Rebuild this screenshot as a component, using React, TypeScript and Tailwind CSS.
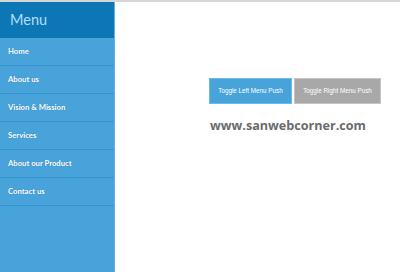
import React from "react";

const items = ["Home", "About us", "Vision & Mission", "Services", "About our Product", "Contact us"];

export default function App() {
  return (
    <div className="w-[400px] h-[272px] overflow-hidden bg-white flex flex-col" style={{ fontFamily: '"Open Sans", sans-serif' }}>
      <div className="h-[2px] bg-[#d6d6d6] shrink-0" />
      <div className="flex flex-1 min-h-0">
        <div className="w-[115px] shrink-0 bg-[#47a3da] border-r border-r-[#62b3e3] flex flex-col">
          <div className="h-[36px] bg-[#0d77b6] flex items-center pl-[10px] pt-[1px] text-[14.5px] font-normal text-[#afdefa] leading-none" style={{ fontFamily: 'Lato, sans-serif' }}>
            Menu
          </div>
          {items.map((t) => (
            <div
              key={t}
              className="h-[28px] border-b border-b-[#3495cf] flex items-center pl-[8px] text-[7.7px] font-bold text-white"
              style={{ textShadow: "0 0 1px rgba(0,0,0,0.25)", fontFamily: 'Lato, sans-serif' }}
            >
              {t}
            </div>
          ))}
        </div>
        <div className="flex-1 flex flex-col items-start pl-[94px] pt-[76px]">
          <div className="flex gap-[2px]">
            <div className="w-[83px] h-[26px] bg-[#47a3da] border border-[#6cb8e6] flex items-center justify-center text-white text-[6.3px]" style={{ fontFamily: '"Liberation Sans", sans-serif' }}>
              Toggle Left Menu Push
            </div>
            <div className="w-[87px] h-[26px] bg-[#a8a8a8] border border-[#c4c4c4] flex items-center justify-center text-white text-[6.3px]" style={{ fontFamily: '"Liberation Sans", sans-serif' }}>
              Toggle Right Menu Push
            </div>
          </div>
          <div className="mt-[16px] ml-[1px] text-[12.6px] font-bold text-[#6b6b6b] leading-none">
            www.sanwebcorner.com
          </div>
        </div>
      </div>
    </div>
  );
}
